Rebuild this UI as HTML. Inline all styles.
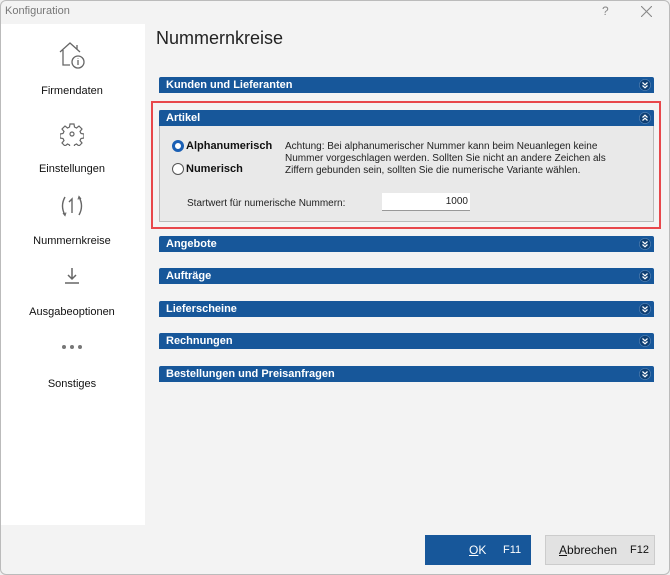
<!DOCTYPE html><html><head><style>
body{margin:0;width:670px;height:575px;background:#f0f0f0;font-family:"Liberation Sans",sans-serif;position:relative;overflow:hidden}
.a{position:absolute}
.win{left:0;top:0;width:668px;height:573px;border:1px solid #bbb;border-radius:6px;background:#f3f3f3;overflow:hidden}
.side{left:1px;top:24px;width:144px;height:501px;background:#fff}
.lab{width:144px;text-align:center;font-size:11px;color:#111}
.bar{left:159px;width:495px;height:16px;background:#17579a;color:#fff;font-weight:bold;font-size:11px;line-height:16px;border-radius:2px 2px 0 0}
.bar span{margin-left:7px}
.chev{right:3px;top:2px}
.t{font-size:10px;color:#222}
</style></head><body>
<div class="a win"></div>
<div class="a" style="left:5px;top:5px;font-size:11px;color:#777">Konfiguration</div>
<div class="a" style="left:602px;top:4px;font-size:12px;color:#888">?</div>
<svg class="a" style="left:641px;top:6px" width="11" height="11" viewBox="0 0 11 11" stroke="#888" stroke-width="1.1"><path d="M0 0L11 11M11 0L0 11"/></svg>
<div class="a side"></div>
<svg class="a" style="left:56px;top:38px" width="32" height="32" viewBox="0 0 32 32" fill="none" stroke="#666" stroke-width="1.3"><path d="M4 14 L14 5 L24 14 M7 12 V27 H14 M21 7 V11"/><circle cx="22" cy="24" r="6"/><path d="M22 22 V27 M22 20 V20.5"/></svg>
<div class="a lab" style="left:0;top:85px">Firmendaten</div>
<svg class="a" style="left:60px;top:122px" width="24" height="24" viewBox="0 0 24 24" fill="none" stroke="#666" stroke-width="1.2"><path d="M10 2h4l.5 3 2 1 2.5-2 3 3-2 2.5 1 2 3 .5v4l-3 .5-1 2 2 2.5-3 3-2.5-2-2 1-.5 3h-4l-.5-3-2-1-2.5 2-3-3 2-2.5-1-2-3-.5v-4l3-.5 1-2-2-2.5 3-3 2.5 2 2-1z"/><circle cx="12" cy="12" r="2"/></svg>
<div class="a lab" style="left:0;top:163px">Einstellungen</div>
<svg class="a" style="left:59px;top:194px" width="26" height="24" viewBox="0 0 26 24" fill="none" stroke="#666" stroke-width="1.4"><path d="M6 3 Q1 12 6 21 M20 3 Q25 12 20 21 M10 8 L13 5 V19"/><path d="M4 19l2 2.5 1-3M22 5l-2-2.5-1 3" stroke-width="1.1"/></svg>
<div class="a lab" style="left:0;top:235px">Nummernkreise</div>
<svg class="a" style="left:62px;top:266px" width="20" height="20" viewBox="0 0 20 20" fill="none" stroke="#666" stroke-width="1.5"><path d="M10 2V13 M6 9l4 4 4-4 M3 17H17"/></svg>
<div class="a lab" style="left:0;top:306px">Ausgabeoptionen</div>
<svg class="a" style="left:61px;top:344px" width="22" height="6"><circle cx="3" cy="3" r="2" fill="#777"/><circle cx="11" cy="3" r="2" fill="#777"/><circle cx="19" cy="3" r="2" fill="#777"/></svg>
<div class="a lab" style="left:0;top:378px">Sonstiges</div>
<div class="a" style="left:156px;top:28px;font-size:18px;color:#222">Nummernkreise</div>
<svg width="0" height="0" style="position:absolute"><defs>
<symbol id="dn" viewBox="0 0 12 12"><circle cx="6" cy="6" r="5.6" fill="#0e3f74" stroke="#5a87b8" stroke-width=".6"/><path d="M3.5 3.5L6 5.8 8.5 3.5M3.5 6.5L6 8.8 8.5 6.5" fill="none" stroke="#fff" stroke-width="1.2"/></symbol>
<symbol id="up" viewBox="0 0 12 12"><circle cx="6" cy="6" r="5.6" fill="#0e3f74" stroke="#5a87b8" stroke-width=".6"/><path d="M3.5 5.5L6 3.2 8.5 5.5M3.5 8.5L6 6.2 8.5 8.5" fill="none" stroke="#fff" stroke-width="1.2"/></symbol></defs></svg>
<div class="a bar" style="top:77px"><span>Kunden und Lieferanten</span><svg class="a chev" width="12" height="12"><use href="#dn"/></svg></div>
<div class="a" style="left:151px;top:101px;width:506px;height:124px;border:2px solid #e8474b"></div>
<div class="a" style="left:159px;top:110px;width:493px;height:110px;border:1px solid #bbb;background:#e9e9e9"></div>
<div class="a bar" style="top:110px"><span>Artikel</span><svg class="a chev" width="12" height="12"><use href="#up"/></svg></div>
<div class="a" style="left:172px;top:140px;width:6px;height:6px;border-radius:50%;border:3px solid #1a5fb4;background:#fff"></div>
<div class="a" style="left:186px;top:140px;font-size:11px;font-weight:bold;color:#111">Alphanumerisch</div>
<div class="a" style="left:172px;top:163px;width:10px;height:10px;border-radius:50%;border:1px solid #555;background:#fff"></div>
<div class="a" style="left:186px;top:163px;font-size:11px;font-weight:bold;color:#111">Numerisch</div>
<div class="a t" style="left:285px;top:141px;line-height:12px;width:360px">Achtung: Bei alphanumerischer Nummer kann beim Neuanlegen keine<br>Nummer vorgeschlagen werden. Sollten Sie nicht an andere Zeichen als<br>Ziffern gebunden sein, sollten Sie die numerische Variante wählen.</div>
<div class="a t" style="left:187px;top:198px">Startwert für numerische Nummern:</div>
<div class="a t" style="left:382px;top:193px;width:86px;height:17px;background:#fff;border-bottom:1px solid #999;text-align:right;line-height:17px;padding-right:2px">1000</div>
<div class="a bar" style="top:236px"><span>Angebote</span><svg class="a chev" width="12" height="12"><use href="#dn"/></svg></div>
<div class="a bar" style="top:268px"><span>Aufträge</span><svg class="a chev" width="12" height="12"><use href="#dn"/></svg></div>
<div class="a bar" style="top:301px"><span>Lieferscheine</span><svg class="a chev" width="12" height="12"><use href="#dn"/></svg></div>
<div class="a bar" style="top:333px"><span>Rechnungen</span><svg class="a chev" width="12" height="12"><use href="#dn"/></svg></div>
<div class="a bar" style="top:366px"><span>Bestellungen und Preisanfragen</span><svg class="a chev" width="12" height="12"><use href="#dn"/></svg></div>
<div class="a" style="left:425px;top:535px;width:106px;height:30px;background:#17579a;color:#fff;font-size:12px;line-height:30px"><span style="position:absolute;left:44px"><u>O</u>K</span><span style="position:absolute;left:78px;font-size:11px">F11</span></div>
<div class="a" style="left:545px;top:535px;width:110px;height:30px;background:#e2e2e2;border:1px solid #ccc;box-sizing:border-box;color:#111;font-size:12px;line-height:28px"><span style="position:absolute;left:13px"><u>A</u>bbrechen</span><span style="position:absolute;left:84px;font-size:11px">F12</span></div>
</body></html>
